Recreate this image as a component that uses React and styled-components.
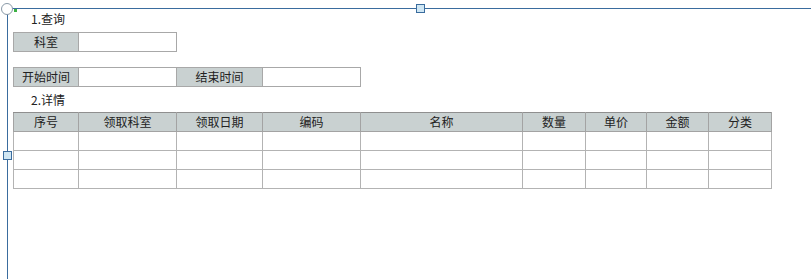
import React from "react";
import styled, { createGlobalStyle } from "styled-components";

const Global = createGlobalStyle`
  html, body { margin: 0; padding: 0; background: #fff; }
  body {
    font-family: "Microsoft YaHei", "Noto Sans CJK SC", "Noto Sans", sans-serif;
    font-size: 12px;
    color: #222;
  }
`;

const Canvas = styled.div`
  position: relative;
  margin: 8px 0 0 7px;
  height: 271px;
  border-top: 1px solid #3a6c9e;
  border-left: 1px solid #3a6c9e;
  box-sizing: border-box;
`;

const Corner = styled.div`
  position: absolute;
  left: -7px;
  top: -6px;
  width: 10px;
  height: 10px;
  border-radius: 50%;
  border: 1px solid #8a9aa8;
  background: #fff;
`;

const Anchor = styled.div`
  position: absolute;
  left: 6px;
  top: 0px;
  width: 3px;
  height: 3px;
  background: #3cb043;
`;

const Handle = styled.div`
  position: absolute;
  width: 7px;
  height: 7px;
  border: 1px solid #3a6c9e;
  background: #cfe6f3;
  ${(p) => (p.$side === "top" ? "left: 408px; top: -5px;" : "left: -5px; top: 142px;")}
`;

const Content = styled.div`
  padding: 0 0 0 5px;
  display: flex;
  flex-direction: column;
`;

const Title = styled.div`
  height: 20px;
  line-height: 20px;
  padding-left: 18px;
  margin-top: ${(p) => p.$top || 0}px;
`;

const FieldRow = styled.div`
  display: flex;
  margin-top: ${(p) => p.$top || 0}px;
`;

const Cell = styled.div`
  box-sizing: border-box;
  width: ${(p) => p.$w + 1}px;
  height: 20px;
  line-height: 18px;
  text-align: center;
  border: 1px solid #a8a8a8;
  margin-left: ${(p) => (p.$first ? 0 : -1)}px;
  background: ${(p) => (p.$label ? "#c9d1d1" : "#fff")};
  color: #222;
`;

const Grid = styled.table`
  border-collapse: collapse;
  table-layout: fixed;
  margin-top: 2px;
  width: 759px;
`;

const Th = styled.th`
  font-weight: normal;
  height: 18px;
  padding: 0;
  line-height: 18px;
  background: #c9d1d1;
  border: 1px solid #a3a3a3;
  border-top-color: #8f8f8f;
  border-left-color: ${(p) => (p.$dark ? "#6a6a6a" : "#a3a3a3")};
  color: #222;
`;

const Td = styled.td`
  height: 18px;
  padding: 0;
  border: 1px solid #b3b3b3;
  border-left-color: ${(p) => (p.$dark ? "#6a6a6a" : "#b3b3b3")};
  background: #fff;
`;

const columns = [
  { name: "序号", w: 65 },
  { name: "领取科室", w: 98 },
  { name: "领取日期", w: 86 },
  { name: "编码", w: 98 },
  { name: "名称", w: 162, dark: true },
  { name: "数量", w: 63, dark: true },
  { name: "单价", w: 61 },
  { name: "金额", w: 62, dark: true },
  { name: "分类", w: 63 },
];

export default function App() {
  return (
    <>
      <Global />
      <Canvas>
        <Corner />
        <Anchor />
        <Handle $side="top" />
        <Handle $side="left" />
        <Content>
          <Title>1.查询</Title>
          <FieldRow $top={3}>
            <Cell $first $label $w={65}>科室</Cell>
            <Cell $w={98} />
          </FieldRow>
          <FieldRow $top={15}>
            <Cell $first $label $w={65}>开始时间</Cell>
            <Cell $w={98} />
            <Cell $label $w={86}>结束时间</Cell>
            <Cell $w={98} />
          </FieldRow>
          <Title $top={3}>2.详情</Title>
          <Grid>
            <colgroup>
              {columns.map((c) => (
                <col key={c.name} style={{ width: c.w }} />
              ))}
            </colgroup>
            <thead>
              <tr>
                {columns.map((c) => (
                  <Th key={c.name} $dark={c.dark}>{c.name}</Th>
                ))}
              </tr>
            </thead>
            <tbody>
              {[0, 1, 2].map((r) => (
                <tr key={r}>
                  {columns.map((c) => (
                    <Td key={c.name} $dark={c.dark} />
                  ))}
                </tr>
              ))}
            </tbody>
          </Grid>
        </Content>
      </Canvas>
    </>
  );
}
